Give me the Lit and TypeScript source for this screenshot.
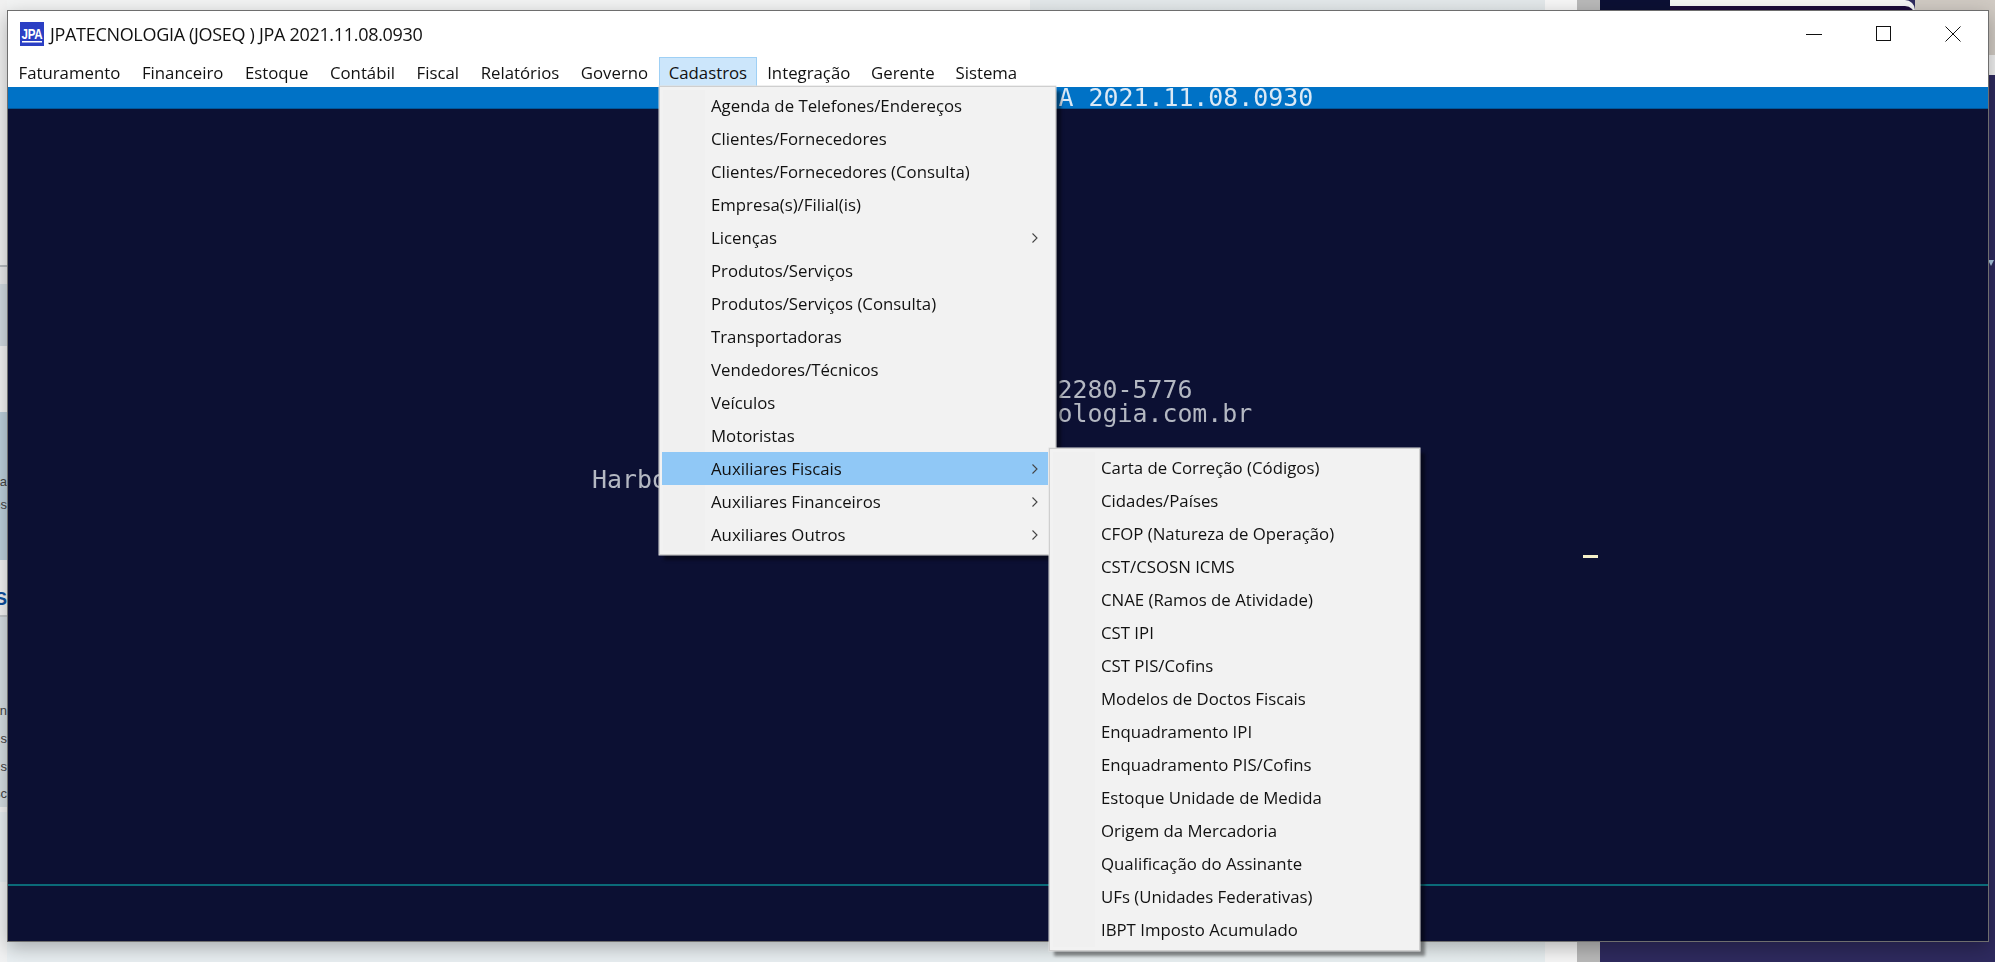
import { LitElement, html, css, svg } from "lit";
import { customElement } from "lit/decorators.js";

const MENUBAR = ["Faturamento","Financeiro","Estoque","Contábil","Fiscal","Relatórios","Governo","Cadastros","Integração","Gerente","Sistema"];
const CAD = ["Agenda de Telefones/Endereços","Clientes/Fornecedores","Clientes/Fornecedores (Consulta)","Empresa(s)/Filial(is)","Licenças","Produtos/Serviços","Produtos/Serviços (Consulta)","Transportadoras","Vendedores/Técnicos","Veículos","Motoristas","Auxiliares Fiscais","Auxiliares Financeiros","Auxiliares Outros"];
const ARROWS = new Set(["Licenças","Auxiliares Fiscais","Auxiliares Financeiros","Auxiliares Outros"]);
const SUB = ["Carta de Correção (Códigos)","Cidades/Países","CFOP (Natureza de Operação)","CST/CSOSN ICMS","CNAE (Ramos de Atividade)","CST IPI","CST PIS/Cofins","Modelos de Doctos Fiscais","Enquadramento IPI","Enquadramento PIS/Cofins","Estoque Unidade de Medida","Origem da Mercadoria","Qualificação do Assinante","UFs (Unidades Federativas)","IBPT Imposto Acumulado"];
const LEFT_BANDS: [number,string,string?][] = [[265,"#f1f1f1"],[2,"#b8bcc0"],[17,"#e9eaeb"],[62,"#d2dbe1"],[66,"#f3f3f3"],[148,"#bdd0dc"],[50,"#f3f3f3"],[5,"#f3f3f3"],[2,"#c4c8cb"],[190,"#d6dee3"],[5,"#f3f3f3"],[50,"#e8eef1"],[20,"#e8eef1"]];

@customElement("app-root")
export class AppRoot extends LitElement {
  static styles = css`
    :host { display:block; width:1995px; height:962px; position:relative; overflow:hidden; background:#f1f2f3; font-family:"Open Sans","Liberation Sans",sans-serif; }
    .desktop { position:absolute; inset:0; display:flex; }
    .strip { width:7px; display:flex; flex-direction:column; flex:none; }
    .strip div { flex:none; }
    .app { flex:none; width:1593px; display:flex; }
    .app .c1 { flex:none; width:1023px; background:linear-gradient(#f2f3f3 0 12px,#e9eff2 942px); }
    .app .c2 { flex:none; width:515px; background:linear-gradient(#e3e8ea,#e8eff1); }
    .app .c3 { flex:none; width:32px; background:#f6f6f6; }
    .app .c4 { flex:none; width:23px; background:#b9b9b9; }
    .dark { flex:1; background:#2e2a5e; position:relative; }
    .top { display:flex; height:12px; align-items:stretch; }
    .top .navy { width:70px; background:#0c1034; flex:none; }
    .top .card { width:245px; flex:none; background:#f5f5f5; padding-top:2px; border-radius:0 10px 0 0; }
    .top .card div { background:#1c0a3a; height:100%; margin-top:4px; border-radius:0 10px 0 0; }
    .top .wall { flex:1; background:#d0cac3; }
    .edge { position:absolute; right:0; top:12px; width:6px; height:63px; background:linear-gradient(#d0cac3 0 43px,#efefef 43px); }
    .tick { position:absolute; right:1px; top:260px; width:0; height:0; border:3px solid transparent; border-top:6px solid #a9c6e0; }

    .frag { font:13px "Liberation Sans",sans-serif; color:#444; position:absolute; overflow:hidden; width:7px; white-space:nowrap; direction:rtl; }
    .frag.blue { color:#0b4f9e; font-weight:700; font-size:18px; }

    .window { position:absolute; left:7px; top:10px; width:1982px; height:932px; box-sizing:border-box; border:1.5px solid #6e6e6e; background:#fff; display:flex; flex-direction:column; box-shadow:0 6px 18px rgba(0,0,0,.28); filter:blur(.35px); }
    .title { height:46px; flex:none; display:flex; align-items:center; padding:0 0 0 12px; font-size:18px; letter-spacing:-.31px; color:#111; }
    .title .name { flex:1; white-space:nowrap; margin-left:6px; }
    .ctl { width:69.5px; height:46px; flex:none; display:flex; align-items:center; justify-content:center; margin-top:-1px; }
    .ctl svg { display:block; }
    .menubar { height:30px; flex:none; display:flex; align-items:stretch; font-size:16.8px; color:#111; position:relative; z-index:3; }
    .mi { padding:0 10.8px; display:flex; align-items:center; white-space:nowrap; position:relative; }
    .mi:first-child { padding-left:10.5px; }
    .mi.open { background:#cce6fb; box-shadow:inset 0 0 0 1px #9fd0f5; padding:0 9.7px; }
    .mi.open ~ .mi { padding:0 10.4px; }
    .bar { height:22px; flex:none; background:#0072c6; border-bottom:1px solid #00579a; box-sizing:border-box; font:24.9px/21px "DejaVu Sans Mono",monospace; color:#dbe9f5; padding-left:1050.5px; white-space:pre; }
    .term { flex:1; background:#0c1033; display:flex; flex-direction:column; font:24.9px/25px "DejaVu Sans Mono",monospace; color:#b4b8c2; padding-top:268px; min-height:0; }
    .term .ln { height:25px; white-space:pre; flex:none; }
    .term .ln.l0 { height:24px; }
    .l1 { padding-left:1049.5px; }
    .l3 { padding-left:584px; margin-top:41px; }
    .cursor { width:15px; height:3px; background:#f5f0c8; margin:63px 0 0 1574.5px; flex:none; }
    .teal { margin-top:auto; height:2px; background:#0b6a78; flex:none; margin-bottom:55px; }

    .menu { position:absolute; background:#f2f2f2; border:1px solid #cfcfcf; box-shadow:0 0 0 .5px #e0e0e0, 5px 5px 3px rgba(0,0,0,.42); padding:2px 2px; color:#111; font-size:16.8px; box-sizing:border-box; z-index:5; }
    .menu::before { content:""; position:absolute; left:3px; top:3px; bottom:3px; width:42px; background:#f0f0f0; }
    .main { left:0; top:calc(100% - 1px); width:397px; height:469px; }
    .row { height:33px; display:flex; align-items:center; padding-left:49px; position:relative; white-space:nowrap; }
    .row.hi { background:#90c8f6; margin-right:5px; }
    .row svg { position:absolute; right:14px; top:11px; }
    .row.hi > svg { right:9px; }
    .sub { left:calc(100% + 1px); top:-4px; width:371px; height:503px; padding:2px 2px; }
    .sub::before { width:42px; }
    .txt { position:relative; }
  `;

  logo() {
    return svg`<svg width="24" height="24" viewBox="0 0 24 24" style="display:block;flex:none">
      <rect width="24" height="24" fill="#2b3fc4"/>
      <text x="12" y="17" text-anchor="middle" textLength="21" lengthAdjust="spacingAndGlyphs" font-family="Liberation Sans" font-weight="700" font-size="15" fill="#fff">JPA</text>
      <rect x="2" y="19" width="20" height="1.5" fill="#fff"/>
    </svg>`;
  }
  chevron() {
    return svg`<svg width="8" height="12" viewBox="0 0 8 12"><path d="M1.5 1.5 6 6 1.5 10.5" fill="none" stroke="#444" stroke-width="1.1"/></svg>`;
  }
  render() {
    return html`
      <div class="desktop">
        <div class="strip">${LEFT_BANDS.map(([h,c]) => html`<div style="height:${h}px;background:${c}"></div>`)}</div>
        <div class="app"><div class="c1"></div><div class="c2"></div><div class="c3"></div><div class="c4"></div></div>
        <div class="dark">
          <div class="top"><div class="navy"></div><div class="card"><div></div></div><div class="wall"></div></div>
          <div class="edge"></div><div class="tick"></div>
        </div>
      </div>
      <span class="frag" style="left:0;top:474px">a</span>
      <span class="frag" style="left:0;top:497px">es</span>
      <span class="frag blue" style="left:0;top:589px">TS</span>
      <span class="frag" style="left:0;top:703px">an</span>
      <span class="frag" style="left:0;top:731px">s,</span>
      <span class="frag" style="left:0;top:759px">s</span>
      <span class="frag" style="left:0;top:786px">sc</span>

      <div class="window">
        <div class="title">
          ${this.logo()}
          <span class="name">JPATECNOLOGIA (JOSEQ ) JPA 2021.11.08.0930</span>
          <div class="ctl"><svg width="16" height="16" viewBox="0 0 16 16"><path d="M0 8.5h16" stroke="#111" stroke-width="1"/></svg></div>
          <div class="ctl"><svg width="15" height="15" viewBox="0 0 15 15"><rect x=".5" y=".5" width="14" height="14" fill="none" stroke="#111" stroke-width="1"/></svg></div>
          <div class="ctl"><svg width="16" height="16" viewBox="0 0 16 16"><path d="M.5.5l15 15M15.5.5l-15 15" stroke="#111" stroke-width="1"/></svg></div>
        </div>
        <div class="menubar">
          ${MENUBAR.map(m => html`<div class="mi ${m === "Cadastros" ? "open" : ""}">${m}${m === "Cadastros" ? this.mainMenu() : ""}</div>`)}
        </div>
        <div class="bar">A 2021.11.08.0930</div>
        <div class="term">
          <div class="ln l0 l1">2280-5776</div>
          <div class="ln l1">ologia.com.br</div>
          <div class="ln l3">Harbo</div>
          <div class="cursor"></div>
          <div class="teal"></div>
        </div>
      </div>
    `;
  }
  mainMenu() {
    return html`<div class="menu main">
      ${CAD.map(c => html`<div class="row ${c === "Auxiliares Fiscais" ? "hi" : ""}"><span class="txt">${c}</span>${ARROWS.has(c) ? this.chevron() : ""}${c === "Auxiliares Fiscais" ? this.subMenu() : ""}</div>`)}
    </div>`;
  }
  subMenu() {
    return html`<div class="menu sub">${SUB.map(s => html`<div class="row"><span class="txt">${s}</span></div>`)}</div>`;
  }
}
